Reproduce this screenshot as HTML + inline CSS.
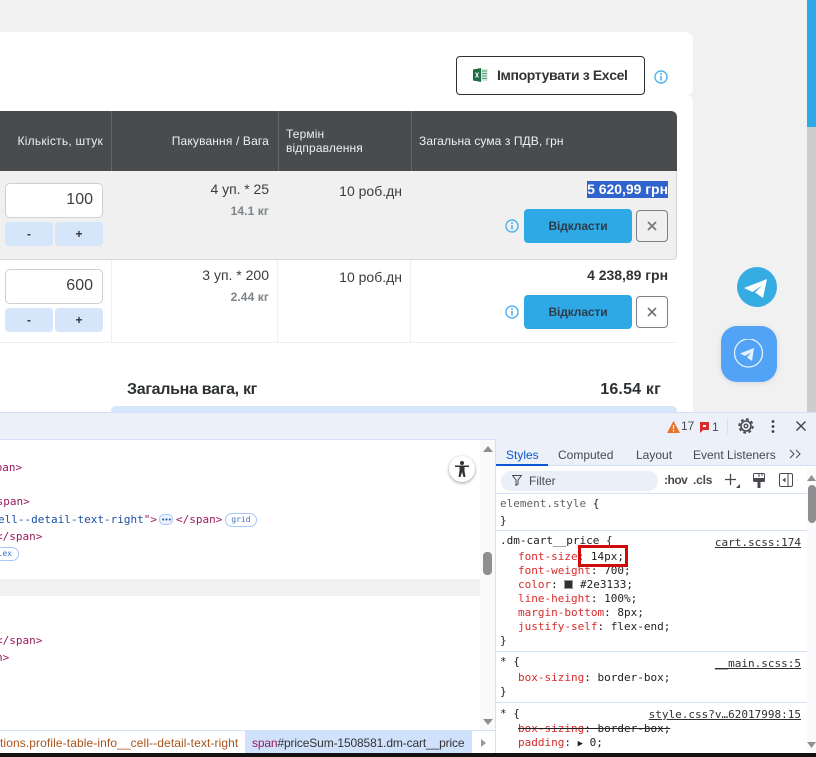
<!DOCTYPE html>
<html lang="uk"><head><meta charset="utf-8">
<style>
html,body{margin:0;padding:0}
body{width:816px;height:757px;overflow:hidden;position:relative;background:#f1f1f1;font-family:"Liberation Sans",sans-serif;color:#2e3133}
div,span.t{position:absolute;box-sizing:border-box}
.t{white-space:nowrap;line-height:1}
.r{text-align:right}
.h{color:#eef0f0;font-size:12px;letter-spacing:.12px}
.m{font-size:14px;color:#3a3d3f}
.w{font-size:12px;font-weight:700;color:#7d8489;letter-spacing:.1px}
.inp{background:#fff;border:1px solid #ccd0d3;border-radius:5px;height:35px;width:98px;left:5px}
.num{font-size:16px;color:#3c3f41}
.pm{background:#d5e6fb;border-radius:4px;height:24px;width:48px;font-size:12px;font-weight:700;text-align:center;line-height:24px;color:#333}
.blue{background:#2ea9e6;border-radius:4px;left:524px;width:108px;height:34px;text-align:center;line-height:34px;font-size:12px;font-weight:700;color:#2d3c4a;letter-spacing:-.1px}
.x{left:636px;width:32px;height:32px;border:1px solid #7c8185;border-radius:4px}
.code{font-family:"DejaVu Sans Mono",monospace;font-size:11px;line-height:1;white-space:nowrap}
.tag{color:#9a1b5c}.pn{color:#d92b2b}.val{color:#202124}.lnk{color:#303030;text-decoration:underline}
.ds{font-size:12px;color:#474a4f}
.sep{left:496px;width:311px;height:1px;background:#d3e0f7}
svg{position:absolute;display:block}
</style></head><body>

<!-- page scrollbar -->
<div style="left:807px;top:0;width:9px;height:412px;background:#cdcdcd"></div>
<div style="left:807px;top:0;width:9px;height:127px;background:#2ca9e6"></div>

<!-- card -->
<div style="left:-20px;top:32px;width:713px;height:63px;background:#fff;border-radius:8px 8px 6px 8px"></div>
<div style="left:-20px;top:95px;width:713px;height:322px;background:#fff;border-radius:0 6px 0 0"></div>
<div style="left:-20px;top:85px;width:700px;height:20px;background:#fff"></div>

<!-- import btn -->
<div style="left:456px;top:56px;width:189px;height:39px;background:#fff;border:1px solid #2e3133;border-radius:4px"></div>
<svg style="left:473px;top:68px" width="15" height="14" viewBox="0 0 15 14"><rect x="5" y="1" width="9.5" height="12" fill="#d5e6dc"/><path d="M9 3h5M9 5.500h5M9 8h5M9 10.500h5" stroke="#5c9c7c" stroke-width="1"/><path d="M0 1.500L8 0v14L0 12.500z" fill="#1d7044"/><path d="M2.500 4.500l3 5M5.500 4.500l-3 5" stroke="#fff" stroke-width="1"/></svg>
<span class="t" style="left:497px;top:68px;font-size:14px;font-weight:700;color:#333;letter-spacing:-.37px">Імпортувати з Excel</span>
<svg style="left:654px;top:70px" width="14" height="14" viewBox="0 0 14 14"><circle cx="7" cy="7" r="6" fill="none" stroke="#4db3ea" stroke-width="1.400"/><path d="M7 6v4.500" stroke="#4db3ea" stroke-width="1.600"/><circle cx="7" cy="4" r="1" fill="#4db3ea"/></svg>

<!-- header -->
<div style="left:0;top:111px;width:677px;height:60px;background:#484c4e;border-top-right-radius:6px"></div>
<div style="left:111px;top:111px;width:1px;height:60px;background:#62676a"></div>
<div style="left:278px;top:111px;width:1px;height:60px;background:#62676a"></div>
<div style="left:411px;top:111px;width:1px;height:60px;background:#62676a"></div>
<span class="t h r" style="right:713px;top:135px;letter-spacing:.25px">Кількість, штук</span>
<span class="t h r" style="right:547px;top:135px;letter-spacing:.15px">Пакування / Вага</span>
<span class="t h" style="left:286px;top:128px">Термін</span>
<span class="t h" style="left:286px;top:142px">відправлення</span>
<span class="t h" style="left:419px;top:135px;letter-spacing:.08px">Загальна сума з ПДВ, грн</span>

<!-- row 1 -->
<div style="left:-5px;top:171px;width:682px;height:89px;background:#f0f0f0;border:1px solid #d4d8dc;border-top:0;border-bottom-right-radius:4px"></div>
<div class="inp" style="top:183px"></div>
<span class="t num r" style="right:723px;top:192px">100</span>
<div class="pm" style="left:5px;top:222px">-</div>
<div class="pm" style="left:55px;top:222px">+</div>
<span class="t m r" style="right:547px;top:182px;letter-spacing:-.05px">4 уп. * 25</span>
<span class="t w r" style="right:547px;top:205px">14.1 кг</span>
<span class="t m r" style="right:414px;top:184px">10 роб.дн</span>
<span class="t r" style="left:587px;top:181px;width:81px;height:17px;background:#3063cc;color:#fff;font-size:14px;font-weight:700;line-height:17px;letter-spacing:-.03px">5 620,99 грн</span>
<svg style="left:505px;top:219px" width="14" height="14" viewBox="0 0 14 14"><circle cx="7" cy="7" r="6" fill="none" stroke="#4db3ea" stroke-width="1.400"/><path d="M7 6v4.500" stroke="#4db3ea" stroke-width="1.600"/><circle cx="7" cy="4" r="1" fill="#4db3ea"/></svg>
<div class="blue" style="top:209px">Відкласти</div>
<div class="x" style="top:210px"></div>
<svg style="left:646px;top:220px" width="12" height="12" viewBox="0 0 12 12"><path d="M2 2l8 8M10 2l-8 8" stroke="#74797d" stroke-width="1.800"/></svg>

<!-- row 2 -->
<div style="left:0;top:342px;width:676px;height:1px;background:#eeeff0"></div>
<div style="left:111px;top:260px;width:1px;height:82px;background:#eeeff0"></div>
<div style="left:277px;top:260px;width:1px;height:82px;background:#eeeff0"></div>
<div style="left:410px;top:260px;width:1px;height:82px;background:#eeeff0"></div>
<div class="inp" style="top:269px"></div>
<span class="t num r" style="right:723px;top:278px">600</span>
<div class="pm" style="left:5px;top:308px">-</div>
<div class="pm" style="left:55px;top:308px">+</div>
<span class="t m r" style="right:547px;top:268px">3 уп. * 200</span>
<span class="t w r" style="right:547px;top:291px">2.44 кг</span>
<span class="t m r" style="right:414px;top:270px">10 роб.дн</span>
<span class="t r" style="right:148px;top:268px;font-size:14px;font-weight:700;color:#333;letter-spacing:-.03px">4 238,89 грн</span>
<svg style="left:505px;top:305px" width="14" height="14" viewBox="0 0 14 14"><circle cx="7" cy="7" r="6" fill="none" stroke="#4db3ea" stroke-width="1.400"/><path d="M7 6v4.500" stroke="#4db3ea" stroke-width="1.600"/><circle cx="7" cy="4" r="1" fill="#4db3ea"/></svg>
<div class="blue" style="top:295px">Відкласти</div>
<div class="x" style="top:296px"></div>
<svg style="left:646px;top:306px" width="12" height="12" viewBox="0 0 12 12"><path d="M2 2l8 8M10 2l-8 8" stroke="#74797d" stroke-width="1.800"/></svg>

<!-- telegram -->
<svg style="left:737px;top:267px" width="40" height="40" viewBox="0 0 40 40"><circle cx="20" cy="20" r="20" fill="#35ade2"/><path d="M7 21L30 12 26 31 18 25.500l7-7-9.500 6.500z" fill="#fff"/></svg>
<div style="left:721px;top:326px;width:56px;height:56px;background:#52a3f6;border-radius:16px;box-shadow:0 1px 6px rgba(0,0,0,.1)"></div>
<svg style="left:734px;top:339px" width="30" height="30" viewBox="0 0 30 30"><circle cx="14.500" cy="14" r="14" fill="none" stroke="#e4f0fd" stroke-width="1.300"/><path d="M6 14.500L20 9 18 22 13 18.500l4-5-6 3.500z" fill="#e4f0fd"/></svg>

<!-- total -->
<span class="t" style="left:127px;top:382px;font-size:16px;font-weight:700;color:#2e3133;letter-spacing:-.3px">Загальна вага, кг</span>
<span class="t r" style="right:155px;top:382px;font-size:16px;font-weight:700;color:#2e3133;letter-spacing:.2px">16.54 кг</span>
<div style="left:111px;top:406px;width:566px;height:10px;background:#d6e6fb;border-radius:5px 5px 0 0"></div>

<!-- devtools -->
<div style="left:0;top:412px;width:816px;height:345px;background:#fff"></div>
<div style="left:0;top:412px;width:816px;height:28px;background:#ebf0f9;border-top:1px solid #d3e0f7;border-bottom:1px solid #d3e0f7"></div>
<svg style="left:667px;top:421px" width="13" height="12" viewBox="0 0 13 12"><path d="M6.500 0L13 12H0z" fill="#e8722c"/><path d="M6.500 4v4M6.500 9v1.500" stroke="#fff" stroke-width="1.200"/></svg>
<span class="t" style="left:681px;top:420px;font-size:12px;color:#474a4f">17</span>
<svg style="left:700px;top:422px" width="9" height="11" viewBox="0 0 9 11"><path d="M0 0h9v8H3L0 11z" fill="#d92b2b"/><rect x="3" y="3" width="3" height="2" fill="#fff"/></svg>
<span class="t" style="left:712px;top:421px;font-size:12px;color:#474a4f">1</span>
<div style="left:727px;top:418px;width:1px;height:16px;background:#d3e0f7"></div>
<svg style="left:738px;top:418px" width="16" height="16" viewBox="0 0 16 16"><circle cx="8" cy="8" r="5" fill="none" stroke="#474a4f" stroke-width="1.600"/><circle cx="8" cy="8" r="1.800" fill="none" stroke="#474a4f" stroke-width="1.400"/><circle cx="8" cy="8" r="6.800" fill="none" stroke="#474a4f" stroke-width="1.800" stroke-dasharray="2.800 2.500"/></svg>
<svg style="left:771px;top:420px" width="4" height="13" viewBox="0 0 4 13"><circle cx="2" cy="1.500" r="1.400" fill="#3c4043"/><circle cx="2" cy="6.500" r="1.400" fill="#3c4043"/><circle cx="2" cy="11.500" r="1.400" fill="#3c4043"/></svg>
<svg style="left:796px;top:421px" width="10" height="10" viewBox="0 0 10 10"><path d="M.5.500l9 9M9.500.500l-9 9" stroke="#3c4043" stroke-width="1.300"/></svg>

<!-- left panel -->
<div style="left:480px;top:440px;width:15px;height:290px;background:#fafafa"></div>
<svg style="left:483px;top:446px" width="10" height="6" viewBox="0 0 10 6"><path d="M5 0l5 6H0z" fill="#8f8f8f"/></svg>
<svg style="left:483px;top:719px" width="10" height="6" viewBox="0 0 10 6"><path d="M5 6L0 0h10z" fill="#8f8f8f"/></svg>
<div style="left:483px;top:552px;width:9px;height:23px;background:#8f8f8f;border-radius:4px"></div>
<div style="left:0;top:579px;width:480px;height:17px;background:#f1f1f1"></div>

<span class="t code tag" style="left:-11px;top:462px">span&gt;</span>
<span class="t code tag" style="left:-10px;top:496px">/span&gt;</span>
<span class="t code" style="left:-2px;top:514px;color:#1a4fa3">ell--detail-text-right<span style="color:#9a1b5c">"&gt;</span></span>
<div style="left:159px;top:514px;width:14px;height:11px;border:1px solid #a8c7fa;border-radius:5px;background:#ebf1fd"></div>
<svg style="left:162px;top:518px" width="9" height="3" viewBox="0 0 9 3"><circle cx="1.200" cy="1.500" r="1" fill="#1a4fa3"/><circle cx="4.500" cy="1.500" r="1" fill="#1a4fa3"/><circle cx="7.800" cy="1.500" r="1" fill="#1a4fa3"/></svg>
<span class="t code tag" style="left:176px;top:514px">&lt;/span&gt;</span>
<div style="left:225px;top:513px;width:32px;height:14px;border:1px solid #a8c7fa;border-radius:7px;font:8px/12px 'DejaVu Sans Mono',monospace;text-align:center;color:#3a72c8">grid</div>
<span class="t code tag" style="left:-4px;top:531px">&lt;/span&gt;</span>
<div style="left:-20px;top:547px;width:39px;height:14px;border:1px solid #a8c7fa;border-radius:7px;font:8px/12px 'DejaVu Sans Mono',monospace;text-align:right;padding-right:6px;color:#3a72c8">flex</div>
<span class="t code tag" style="left:-4px;top:635px">&lt;/span&gt;</span>
<span class="t code tag" style="left:-4px;top:652px">n&gt;</span>

<div style="left:449px;top:456px;width:26px;height:26px;background:#fff;border-radius:50%;box-shadow:0 1px 3px rgba(0,0,0,.4)"></div>
<svg style="left:453px;top:460px" width="18" height="18" viewBox="0 0 18 18"><circle cx="9" cy="3" r="2" fill="#333"/><path d="M2 5.500h14v1.500h-4.500v4l1 6h-2L9 12l-1.500 5h-2l1-6V7H2z" fill="#333"/></svg>

<!-- breadcrumbs -->
<div style="left:0;top:730px;width:495px;height:1px;background:#d3e0f7"></div>
<span class="t" style="left:0;top:737px;font-size:12px;color:#a9541d;letter-spacing:.1px">tions.profile-table-info__cell--detail-text-right</span>
<div style="left:245px;top:731px;width:227px;height:22px;background:#cfe1fb"></div>
<span class="t" style="left:252px;top:737px;font-size:12px;color:#333;letter-spacing:-.14px"><span style="color:#9a1b5c">span</span>#priceSum-1508581.dm-cart__price</span>
<svg style="left:481px;top:739px" width="5" height="8" viewBox="0 0 5 8"><path d="M0 0l5 4-5 4z" fill="#9a9a9a"/></svg>

<!-- splitter -->
<div style="left:495px;top:440px;width:1px;height:313px;background:#d3e0f7"></div>

<!-- right panel -->
<div style="left:496px;top:439px;width:320px;height:27px;background:#ebf0f9;border-bottom:1px solid #d3e0f7"></div>
<div style="left:496px;top:464px;width:52px;height:2px;background:#0b57d0"></div>
<span class="t" style="left:506px;top:449px;font-size:12px;color:#0b57d0">Styles</span>
<span class="t ds" style="left:558px;top:449px">Computed</span>
<span class="t ds" style="left:636px;top:449px">Layout</span>
<span class="t ds" style="left:693px;top:449px">Event Listeners</span>
<svg style="left:789px;top:449px" width="12" height="10" viewBox="0 0 12 10"><path d="M1 1l4 4-4 4M7 1l4 4-4 4" fill="none" stroke="#474a4f" stroke-width="1"/></svg>

<div style="left:501px;top:471px;width:157px;height:20px;background:#eaf0fa;border-radius:10px"></div>
<svg style="left:512px;top:475px" width="10" height="11" viewBox="0 0 10 11"><path d="M.5.500h9L6 5v4L4 10.500V5z" fill="none" stroke="#474a4f" stroke-width="1"/></svg>
<span class="t ds" style="left:529px;top:475px">Filter</span>
<span class="t" style="left:664px;top:474px;font-size:12px;font-weight:700;color:#474a4f;letter-spacing:-.5px">:hov</span>
<span class="t" style="left:693px;top:474px;font-size:12px;font-weight:700;color:#474a4f;letter-spacing:-.2px">.cls</span>
<svg style="left:724px;top:473px" width="17" height="16" viewBox="0 0 17 16"><path d="M6.500 1v11M1 6.500h11" stroke="#474a4f" stroke-width="1.300"/><path d="M16 11v4h-4z" fill="#474a4f"/></svg>
<svg style="left:753px;top:473px" width="12" height="15" viewBox="0 0 12 15"><rect x=".5" y=".5" width="11" height="8" rx="1" fill="none" stroke="#474a4f"/><rect x="1" y="5" width="10" height="3.500" fill="#474a4f"/><path d="M6 1v3M9 1v2" stroke="#474a4f"/><rect x="4.500" y="9" width="3" height="6" fill="#474a4f"/></svg>
<svg style="left:779px;top:473px" width="14" height="14" viewBox="0 0 14 14"><rect x=".5" y=".5" width="13" height="13" rx="1.500" fill="none" stroke="#474a4f"/><path d="M9 1v12" stroke="#474a4f"/><path d="M6.500 4.500v5L3.500 7z" fill="#474a4f"/></svg>
<div class="sep" style="top:493px"></div>

<span class="t code" style="left:500px;top:498px;color:#5f6368">element.style <span style="color:#202124">{</span></span>
<span class="t code val" style="left:500px;top:515px">}</span>
<div class="sep" style="top:530px"></div>

<span class="t code val" style="left:500px;top:535px">.dm-cart__price {</span>
<span class="t code lnk" style="right:15px;top:537px">cart.scss:174</span>
<span class="t code pn" style="left:518px;top:551px">font-size<span class="val">: 14px;</span></span>
<span class="t code pn" style="left:518px;top:565px">font-weight<span class="val">: 700;</span></span>
<span class="t code pn" style="left:518px;top:579px">color<span class="val">: <span style="display:inline-block;width:9px;height:9px;background:#2e3133;border:1px solid #999;box-sizing:border-box;vertical-align:-1px"></span> #2e3133;</span></span>
<span class="t code pn" style="left:518px;top:593px">line-height<span class="val">: 100%;</span></span>
<span class="t code pn" style="left:518px;top:607px">margin-bottom<span class="val">: 8px;</span></span>
<span class="t code pn" style="left:518px;top:621px">justify-self<span class="val">: flex-end;</span></span>
<span class="t code val" style="left:500px;top:635px">}</span>
<div style="left:578px;top:545px;width:50px;height:22px;border:3px solid #d10a0a"></div>
<div class="sep" style="top:651px"></div>

<span class="t code val" style="left:500px;top:656px">* {</span>
<span class="t code lnk" style="right:15px;top:658px">__main.scss:5</span>
<span class="t code pn" style="left:518px;top:672px">box-sizing<span class="val">: border-box;</span></span>
<span class="t code val" style="left:500px;top:686px">}</span>
<div class="sep" style="top:702px"></div>

<span class="t code val" style="left:500px;top:708px">* {</span>
<span class="t code lnk" style="right:15px;top:709px">style.css?v…62017998:15</span>
<span class="t code pn" style="left:518px;top:723px;text-decoration:line-through;text-decoration-color:#202124">box-sizing<span class="val">: border-box;</span></span>
<span class="t code pn" style="left:518px;top:737px">padding<span class="val">: <span style="font-size:9px">▶</span> 0;</span></span>

<!-- right scrollbar -->
<div style="left:807px;top:467px;width:9px;height:286px;background:#fafafa"></div>
<svg style="left:807px;top:475px;" width="9" height="6" viewBox="0 0 9 6"><path d="M4.500 0L9 6H0z" fill="#8f8f8f"/></svg>
<svg style="left:807px;top:742px" width="9" height="6" viewBox="0 0 9 6"><path d="M4.500 6L0 0h9z" fill="#8f8f8f"/></svg>
<div style="left:808px;top:485px;width:8px;height:38px;background:#8f8f8f;border-radius:4px"></div>

<div style="left:0;top:753px;width:816px;height:4px;background:#111"></div>
</body></html>
